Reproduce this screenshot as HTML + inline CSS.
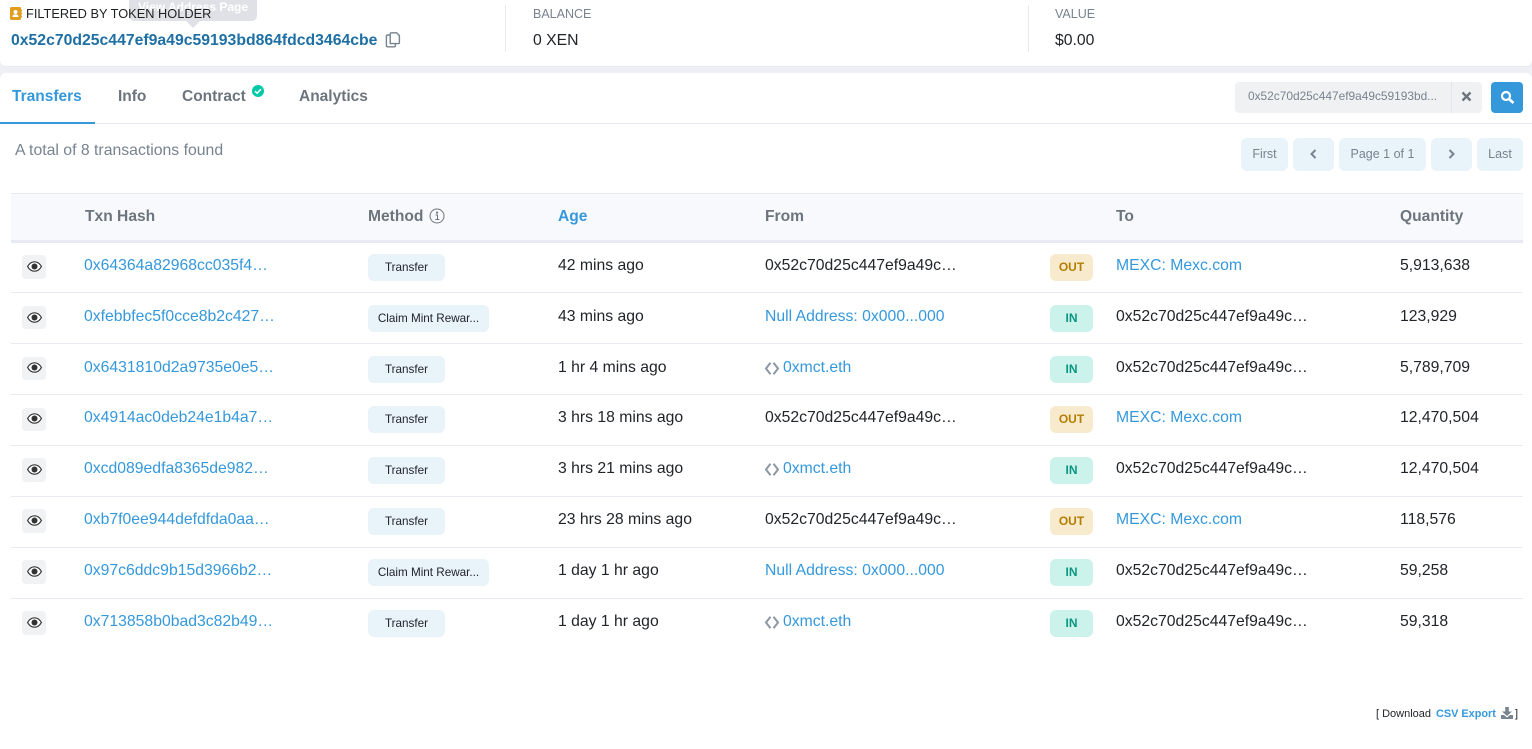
<!DOCTYPE html>
<html><head><meta charset="utf-8">
<style>
html,body{margin:0;padding:0;background:#fff}
body{width:1532px;height:749px;position:relative;overflow:hidden;font-family:"Liberation Sans",sans-serif;font-size:15.75px;color:#212529}
.a{position:absolute;white-space:nowrap;line-height:20px}
.b{position:absolute}
.l{color:#3498db}
.h{font-weight:700;color:#6c757d;top:207px;font-size:15.6px}
.t{font-weight:700;color:#6c757d;top:87px;font-size:15.5px}
.m{position:absolute;height:27px;line-height:27px;background:#e9f3fa;border-radius:6px;text-align:center;font-size:11.7px;color:#212529;white-space:nowrap}
.e{position:absolute;left:22px;width:24px;height:24px;background:#f1f2f4;border-radius:4px}
.d{position:absolute;left:1050px;width:43px;height:27px;line-height:27px;border-radius:6px;text-align:center;font-size:12px;font-weight:700}
.o{background:#f8ebcd;color:#b47d00}
.i{background:#ccf3eb;color:#0a9680}
.s{position:absolute;left:11px;width:1512px;height:1px;background:#e7eaf3}
.p{position:absolute;top:138px;height:33px;line-height:32px;background:#e9f3fa;border-radius:6px;text-align:center;font-size:12.5px;color:#77838f}
.c{position:absolute;left:27px}
</style></head><body>

<svg width="0" height="0" style="position:absolute"><defs>
<g id="eye"><path d="M.6 5.500C2.500 2 5 .8 7.500.8s5 1.200 6.900 4.700c-1.900 3.500-4.400 4.700-6.900 4.700S2.500 9 .6 5.500z" fill="#fff" stroke="#333" stroke-width="1.200"/><circle cx="7.500" cy="5.500" r="3" fill="#333"/></g>
<g id="ens"><path d="M5.500.7L1 6.500l4.500 5.800M8.500.7L13 6.500l-4.500 5.800" fill="none" stroke="#8c98a4" stroke-width="2"/></g>
</defs></svg>

<!-- band with rounded cards -->
<div class="b" style="left:0;top:60px;width:1532px;height:20px;background:#eef0f6"></div>
<div class="b" style="left:0;top:56px;width:1532px;height:10px;background:#fff;border-radius:0 0 6px 6px;box-shadow:0 1px 0 #e7eaf3"></div>
<div class="b" style="left:0;top:73px;width:1532px;height:10px;background:#fff;border-radius:6px 6px 0 0"></div>
<div class="b" style="left:0;top:123px;width:1532px;height:1px;background:#e7eaf3"></div>

<!-- tooltip behind -->
<div class="b" style="left:129px;top:0;width:128px;height:21px;background:#dfe1e6;border-radius:0 0 5px 5px"></div>
<div class="b" style="left:186px;top:21px;width:0;height:0;border-left:7px solid transparent;border-right:7px solid transparent;border-top:7px solid #dfe1e6"></div>
<div class="a" style="left:138px;top:-3px;color:#fff;font-size:12px;font-weight:700">View Address Page</div>

<svg class="b" style="left:10px;top:7px" width="12" height="13" viewBox="0 0 12 13"><rect width="11" height="13" rx="1.500" fill="#e09d1f"/><rect x="11" y="2.500" width="1" height="2" fill="#e09d1f"/><rect x="11" y="5.500" width="1" height="2" fill="#e09d1f"/><rect x="11" y="8.500" width="1" height="2" fill="#e09d1f"/><circle cx="5.500" cy="5" r="2" fill="#fff"/><path d="M2.500 10c0-2 1.300-2.600 3-2.600s3 .6 3 2.600z" fill="#fff"/></svg>
<div class="a" style="left:26px;top:4px;font-size:12.8px;color:#1e2022">FILTERED BY TOKEN HOLDER</div>
<div class="a" style="left:11px;top:31px;font-weight:700;font-size:15.77px;color:#1e6fa3">0x52c70d25c447ef9a49c59193bd864fdcd3464cbe</div>
<svg class="b" style="left:385px;top:32px" width="16" height="16" viewBox="0 0 16 16" fill="#fff" stroke="#77838f" stroke-width="1.400"><rect x="1.400" y="3" width="9" height="11.800" rx="1"/><path d="M5.200 11.600V1.800a1 1 0 0 1 1-1h5.400l2.800 2.800v7a1 1 0 0 1-1 1z"/></svg>

<div class="b" style="left:505px;top:5px;width:1px;height:47px;background:#e7eaf3"></div>
<div class="a" style="left:533px;top:4px;font-size:12.5px;color:#77838f">BALANCE</div>
<div class="a" style="left:533px;top:31px">0 XEN</div>
<div class="b" style="left:1028px;top:5px;width:1px;height:47px;background:#e7eaf3"></div>
<div class="a" style="left:1055px;top:4px;font-size:12.5px;color:#77838f">VALUE</div>
<div class="a" style="left:1055px;top:31px">$0.00</div>

<!-- tabs -->
<div class="a l t" style="left:12px;color:#3498db">Transfers</div>
<div class="b" style="left:0;top:122px;width:95px;height:2px;background:#3498db"></div>
<div class="a t" style="left:118px">Info</div>
<div class="a t" style="left:182px">Contract</div>
<svg class="b" style="left:252px;top:85px" width="12" height="12" viewBox="0 0 12 12"><circle cx="6" cy="6" r="6" fill="#00c9a7"/><path d="M3 6.200l2.100 2L9 4.200" stroke="#fff" stroke-width="1.500" fill="none"/></svg>
<div class="a t" style="left:299px">Analytics</div>

<!-- search -->
<div class="b" style="left:1235px;top:82px;width:247px;height:31px;background:#f0f1f3;border-radius:4px"></div>
<div class="b" style="left:1451px;top:82px;width:1px;height:31px;background:#e3e4e7"></div>
<div class="a" style="left:1248px;top:86px;font-size:11.9px;color:#77838f">0x52c70d25c447ef9a49c59193bd...</div>
<svg class="b" style="left:1461px;top:91px" width="11" height="11" viewBox="0 0 11 11" stroke="#6c757d" stroke-width="2.400"><path d="M1.500 1.500l8 8M9.500 1.500l-8 8"/></svg>
<div class="b" style="left:1491px;top:82px;width:32px;height:31px;background:#3498db;border-radius:4px"></div>
<svg class="b" style="left:1500px;top:90px" width="15" height="15" viewBox="0 0 15 15" fill="none" stroke="#fff"><circle cx="6" cy="6" r="4" stroke-width="2.200"/><path d="M9 9l4.500 4" stroke-width="2.600"/></svg>

<div class="a" style="left:15px;top:141px;color:#77838f;font-size:15.8px">A total of 8 transactions found</div>

<div class="p" style="left:1241px;width:47px">First</div>
<div class="p" style="left:1293px;width:41px"><svg width="7" height="10" viewBox="0 0 7 10" fill="none" stroke="#77838f" stroke-width="2" style="margin-top:11px"><path d="M5.500 1L1.500 5l4 4"/></svg></div>
<div class="p" style="left:1339px;width:87px">Page 1 of 1</div>
<div class="p" style="left:1431px;width:41px"><svg width="7" height="10" viewBox="0 0 7 10" fill="none" stroke="#77838f" stroke-width="2" style="margin-top:11px"><path d="M1.500 1l4 4-4 4"/></svg></div>
<div class="p" style="left:1477px;width:46px">Last</div>

<!-- table header -->
<div class="b" style="left:11px;top:193px;width:1512px;height:50px;background:#f8f9fd;border-top:1px solid #e7eaf3;border-bottom:3px solid #e7eaf3;box-sizing:border-box"></div>
<div class="a h" style="left:85px">Txn Hash</div>
<div class="a h" style="left:368px">Method</div>
<svg class="b" style="left:429px;top:208px" width="16" height="16" viewBox="0 0 16 16" fill="none" stroke="#6c757d"><circle cx="8" cy="8" r="7"/><path d="M6.500 7h2v4.500M6.300 11.500h4"/><circle cx="8" cy="4.600" r=".6" fill="#6c757d"/></svg>
<div class="a h" style="left:558px;color:#3498db">Age</div>
<div class="a h" style="left:765px">From</div>
<div class="a h" style="left:1116px">To</div>
<div class="a h" style="left:1400px">Quantity</div>

<div class="s" style="top:292px"></div><div class="s" style="top:343px"></div><div class="s" style="top:394px"></div><div class="s" style="top:445px"></div><div class="s" style="top:496px"></div><div class="s" style="top:547px"></div><div class="s" style="top:598px"></div>

<!-- row 1 -->
<div class="e" style="top:255px"></div><svg class="c" style="top:261px" width="15" height="11" viewBox="0 0 15 11"><use href="#eye"/></svg>
<div class="a l" style="left:84px;top:256px">0x64364a82968cc035f4…</div>
<div class="m" style="left:368px;top:254px;width:77px">Transfer</div>
<div class="a" style="left:558px;top:256px">42 mins ago</div>
<div class="a" style="left:765px;top:256px">0x52c70d25c447ef9a49c…</div>
<div class="d o" style="top:254px">OUT</div>
<div class="a l" style="left:1116px;top:256px">MEXC: Mexc.com</div>
<div class="a" style="left:1400px;top:256px">5,913,638</div>

<!-- row 2 -->
<div class="e" style="top:306px;height:23px"></div><svg class="c" style="top:312px" width="15" height="11" viewBox="0 0 15 11"><use href="#eye"/></svg>
<div class="a l" style="left:84px;top:307px">0xfebbfec5f0cce8b2c427…</div>
<div class="m" style="left:368px;top:305px;width:121px">Claim Mint Rewar...</div>
<div class="a" style="left:558px;top:307px">43 mins ago</div>
<div class="a l" style="left:765px;top:307px">Null Address: 0x000...000</div>
<div class="d i" style="top:305px">IN</div>
<div class="a" style="left:1116px;top:307px">0x52c70d25c447ef9a49c…</div>
<div class="a" style="left:1400px;top:307px">123,929</div>

<!-- row 3 -->
<div class="e" style="top:357px;height:23px"></div><svg class="c" style="top:362px" width="15" height="11" viewBox="0 0 15 11"><use href="#eye"/></svg>
<div class="a l" style="left:84px;top:358px">0x6431810d2a9735e0e5…</div>
<div class="m" style="left:368px;top:356px;width:77px">Transfer</div>
<div class="a" style="left:558px;top:358px">1 hr 4 mins ago</div>
<svg class="b" style="left:765px;top:362px" width="14" height="13" viewBox="0 0 14 13"><use href="#ens"/></svg>
<div class="a l" style="left:783px;top:358px">0xmct.eth</div>
<div class="d i" style="top:356px">IN</div>
<div class="a" style="left:1116px;top:358px">0x52c70d25c447ef9a49c…</div>
<div class="a" style="left:1400px;top:358px">5,789,709</div>

<!-- row 4 -->
<div class="e" style="top:408px;height:23px"></div><svg class="c" style="top:413px" width="15" height="11" viewBox="0 0 15 11"><use href="#eye"/></svg>
<div class="a l" style="left:84px;top:408px">0x4914ac0deb24e1b4a7…</div>
<div class="m" style="left:368px;top:406px;width:77px">Transfer</div>
<div class="a" style="left:558px;top:408px">3 hrs 18 mins ago</div>
<div class="a" style="left:765px;top:408px">0x52c70d25c447ef9a49c…</div>
<div class="d o" style="top:406px">OUT</div>
<div class="a l" style="left:1116px;top:408px">MEXC: Mexc.com</div>
<div class="a" style="left:1400px;top:408px">12,470,504</div>

<!-- row 5 -->
<div class="e" style="top:458px"></div><svg class="c" style="top:464px" width="15" height="11" viewBox="0 0 15 11"><use href="#eye"/></svg>
<div class="a l" style="left:84px;top:459px">0xcd089edfa8365de982…</div>
<div class="m" style="left:368px;top:457px;width:77px">Transfer</div>
<div class="a" style="left:558px;top:459px">3 hrs 21 mins ago</div>
<svg class="b" style="left:765px;top:463px" width="14" height="13" viewBox="0 0 14 13"><use href="#ens"/></svg>
<div class="a l" style="left:783px;top:459px">0xmct.eth</div>
<div class="d i" style="top:457px">IN</div>
<div class="a" style="left:1116px;top:459px">0x52c70d25c447ef9a49c…</div>
<div class="a" style="left:1400px;top:459px">12,470,504</div>

<!-- row 6 -->
<div class="e" style="top:509px"></div><svg class="c" style="top:515px" width="15" height="11" viewBox="0 0 15 11"><use href="#eye"/></svg>
<div class="a l" style="left:84px;top:510px">0xb7f0ee944defdfda0aa…</div>
<div class="m" style="left:368px;top:508px;width:77px">Transfer</div>
<div class="a" style="left:558px;top:510px">23 hrs 28 mins ago</div>
<div class="a" style="left:765px;top:510px">0x52c70d25c447ef9a49c…</div>
<div class="d o" style="top:508px">OUT</div>
<div class="a l" style="left:1116px;top:510px">MEXC: Mexc.com</div>
<div class="a" style="left:1400px;top:510px">118,576</div>

<!-- row 7 -->
<div class="e" style="top:560px"></div><svg class="c" style="top:566px" width="15" height="11" viewBox="0 0 15 11"><use href="#eye"/></svg>
<div class="a l" style="left:84px;top:561px">0x97c6ddc9b15d3966b2…</div>
<div class="m" style="left:368px;top:559px;width:121px">Claim Mint Rewar...</div>
<div class="a" style="left:558px;top:561px">1 day 1 hr ago</div>
<div class="a l" style="left:765px;top:561px">Null Address: 0x000...000</div>
<div class="d i" style="top:559px">IN</div>
<div class="a" style="left:1116px;top:561px">0x52c70d25c447ef9a49c…</div>
<div class="a" style="left:1400px;top:561px">59,258</div>

<!-- row 8 -->
<div class="e" style="top:611px"></div><svg class="c" style="top:617px" width="15" height="11" viewBox="0 0 15 11"><use href="#eye"/></svg>
<div class="a l" style="left:84px;top:612px">0x713858b0bad3c82b49…</div>
<div class="m" style="left:368px;top:610px;width:77px">Transfer</div>
<div class="a" style="left:558px;top:612px">1 day 1 hr ago</div>
<svg class="b" style="left:765px;top:616px" width="14" height="13" viewBox="0 0 14 13"><use href="#ens"/></svg>
<div class="a l" style="left:783px;top:612px">0xmct.eth</div>
<div class="d i" style="top:610px">IN</div>
<div class="a" style="left:1116px;top:612px">0x52c70d25c447ef9a49c…</div>
<div class="a" style="left:1400px;top:612px">59,318</div>

<!-- footer -->
<div class="a" style="left:1376px;top:704px;font-size:11px">[ Download</div>
<div class="a l" style="left:1436px;top:704px;font-size:10.9px;font-weight:700">CSV Export</div>
<svg class="b" style="left:1501px;top:707px" width="12" height="12" viewBox="0 0 12 12" fill="#77838f"><path d="M4.200 0h3.600v4.500H11L6 9 1 4.500h3.200z"/><path d="M0 8h3l3 2.500L9 8h3v3.200a.8.8 0 0 1-.8.8H.8a.8.8 0 0 1-.8-.8z"/></svg>
<div class="a" style="left:1515px;top:704px;font-size:11px">]</div>

</body></html>
